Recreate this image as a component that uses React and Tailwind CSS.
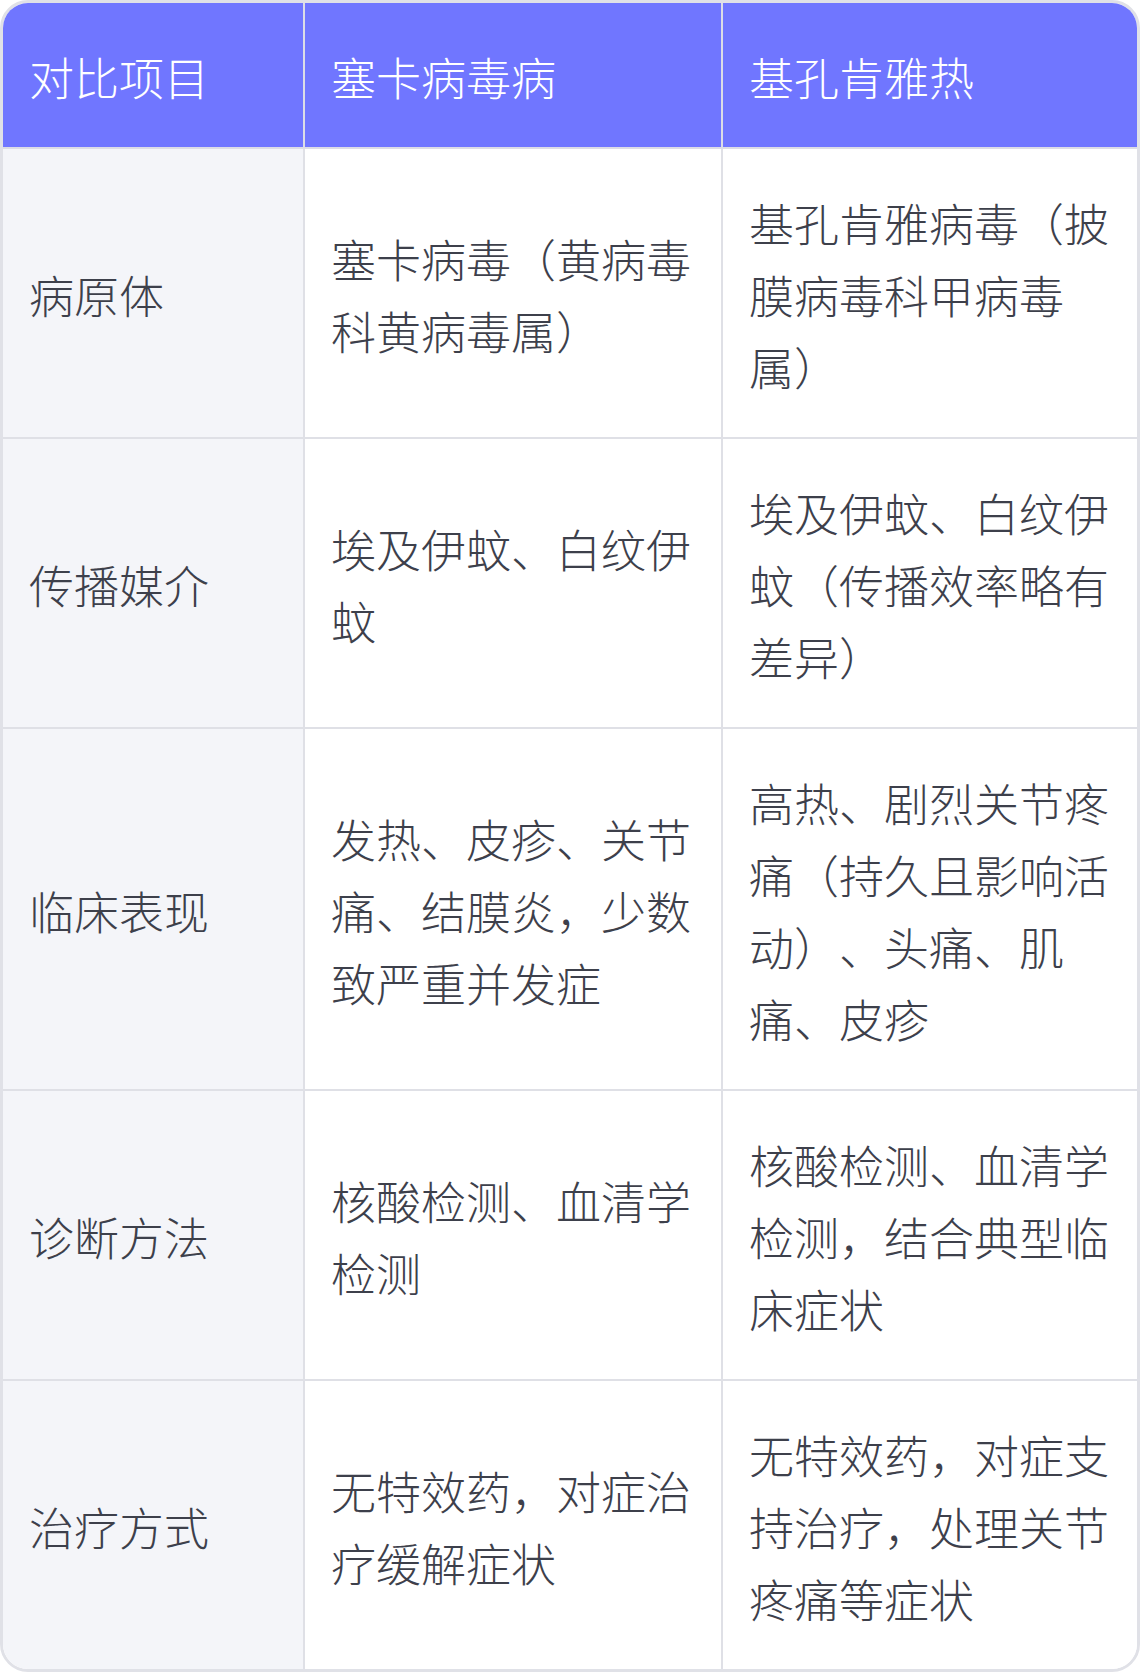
const rows = [
  {
    item: "病原体",
    zika: "塞卡病毒（黄病毒科黄病毒属）",
    chik: "基孔肯雅病毒（披膜病毒科甲病毒属）",
  },
  {
    item: "传播媒介",
    zika: "埃及伊蚊、白纹伊蚊",
    chik: "埃及伊蚊、白纹伊蚊（传播效率略有差异）",
  },
  {
    item: "临床表现",
    zika: "发热、皮疹、关节痛、结膜炎，少数致严重并发症",
    chik: "高热、剧烈关节疼痛（持久且影响活动）、头痛、肌痛、皮疹",
  },
  {
    item: "诊断方法",
    zika: "核酸检测、血清学检测",
    chik: "核酸检测、血清学检测，结合典型临床症状",
  },
  {
    item: "治疗方式",
    zika: "无特效药，对症治疗缓解症状",
    chik: "无特效药，对症支持治疗，处理关节疼痛等症状",
  },
];

export default function App() {
  const font = {
    fontFamily: '"Noto Sans CJK SC", "Noto Sans", sans-serif',
  };

  return (
    <div className="w-[1140px] bg-white" style={font}>
      <div className="rounded-[28px] border-[3px] border-[#e0e1e7] overflow-hidden">
        <div className="grid grid-cols-[302px_418px_1fr] text-[45px] leading-[72px] font-light [text-spacing-trim:space-all]">
          {/* header */}
          <div className="bg-[#7076ff] text-white px-[26px] pt-[38px] pb-[34px] border-r-2 border-b-2 border-[#dcdde6]">
            对比项目
          </div>
          <div className="bg-[#7076ff] text-white px-[26px] pt-[38px] pb-[34px] border-r-2 border-b-2 border-[#dcdde6]">
            塞卡病毒病
          </div>
          <div className="bg-[#7076ff] text-white px-[26px] pt-[38px] pb-[34px] border-b-2 border-[#dcdde6]">
            基孔肯雅热
          </div>

          {rows.map((r, i) => {
            const last = i === rows.length - 1;
            return [
              <div
                key={r.item + "a"}
                className={`bg-[#f4f5f9] text-[#3d404b] px-[26px] pt-[38px] pb-[34px] flex items-center border-r-2 border-[#dfe0e6] ${
                  last ? "" : "border-b-2"
                }`}
              >
                {r.item}
              </div>,
              <div
                key={r.item + "b"}
                className={`bg-white text-[#3d404b] px-[26px] pt-[38px] pb-[34px] flex items-center border-r-2 border-[#dfe0e6] ${
                  last ? "" : "border-b-2"
                }`}
              >
                <span>{r.zika}</span>
              </div>,
              <div
                key={r.item + "c"}
                className={`bg-white text-[#3d404b] px-[26px] pt-[38px] pb-[34px] flex items-center border-[#dfe0e6] ${
                  last ? "" : "border-b-2"
                }`}
              >
                <span>{r.chik}</span>
              </div>,
            ];
          })}
        </div>
      </div>
    </div>
  );
}
